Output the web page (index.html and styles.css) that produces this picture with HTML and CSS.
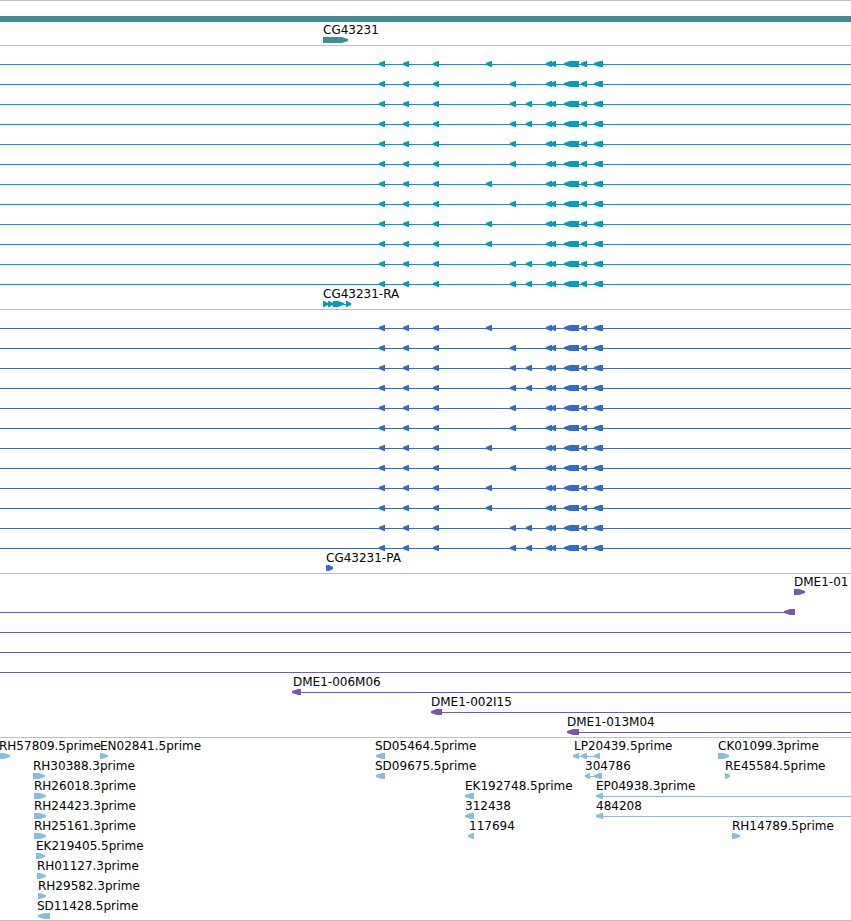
FILE: index.html
```html
<!DOCTYPE html>
<html lang="en">
<head>
  <meta charset="UTF-8" />
  <title>Genome browser – CG43231</title>
  <link rel="stylesheet" href="styles.css">
</head>
<body>
  <main class="browser">
    <section class="track genes" id="genes" aria-label="Genes"></section>
    <section class="track transcripts" id="transcripts" aria-label="Transcripts"></section>
    <section class="track cds" id="cds" aria-label="CDS"></section>
    <section class="track bacs" id="bacs" aria-label="BACs"></section>
    <section class="track ests" id="ests" aria-label="ESTs"></section>
  </main>
  <script src="tracks.js"></script>
</body>
</html>
```

FILE: styles.css
```css
* {
  box-sizing: border-box;
}
body {
  margin: 0;
  background: #fff;
  color: #000;
  font-family: "DejaVu Sans", sans-serif;
  font-size: 12px;
  line-height: 13px;
}
.browser {
  overflow: hidden;
}
.track {
  display: grid;
  border-top: 1px solid #c0c0c0;
  padding: 2px 0 1px;
}
.track:last-child {
  padding-bottom: 0;
  border-bottom: 1px solid #c0c0c0;
}
.row {
  position: relative;
  height: 20px;
  padding-top: 13px;
}
.label {
  position: absolute;
  top: 0;
  white-space: nowrap;
}
.glyphs {
  display: block;
  width: 100%;
  height: 6px;
}

/* track colours */
.genes {
  row-gap: 1px;
  fill: #408e95;
}
.transcripts {
  fill: #009ebd;
}
.cds {
  fill: #316ccc;
}
.bacs {
  fill: #7558a8;
}
.ests {
  fill: #88bddd;
}
```

FILE: tracks.js
```js
const SVG_NS = 'http://www.w3.org/2000/svg';
const HEAD = 6; // arrow head length

// exons shared by every splice variant, [start, end]
const sharedExons = [
  [379, 385], [403, 409], [433, 439],
  [546, 552], [551, 556], [564, 579], [581, 587], [594, 603]
];
const altExons = { A: [486, 492], B: [510, 516], C: [526, 532] };
const variants = ['A', 'B', 'BC', 'BC', 'B', 'B', 'A', 'B', 'A', 'A', 'BC', 'BC'];

const variantRows = variants.map((keys) => [{
  line: [0, null],
  left: sharedExons.concat([...keys].map((k) => altExons[k]))
}]);

// line: [start, end], end null runs to the edge of the view
const tracks = {
  genes: [
    [{ bar: true }],
    [{ name: 'CG43231', at: 323, right: [[323, 348]] }]
  ],
  transcripts: [
    ...variantRows,
    [{ name: 'CG43231-RA', at: 323, line: [323, 351], right: [[323, 328], [328, 333], [333, 344], [346, 351]] }]
  ],
  cds: [
    ...variantRows,
    [{ name: 'CG43231-PA', at: 326, right: [[326, 331], [328, 333]] }]
  ],
  bacs: [
    [{ name: 'DME1-01', at: 794, right: [[794, 805]] }],
    [{ line: [0, 795], left: [[784, 795]] }],
    [{ line: [0, null] }],
    [{ line: [0, null] }],
    [{ line: [0, null] }],
    [{ name: 'DME1-006M06', at: 293, line: [293, null], left: [[292, 301]] }],
    [{ name: 'DME1-002I15', at: 431, line: [431, null], left: [[431, 442]] }],
    [{ name: 'DME1-013M04', at: 567, line: [567, null], left: [[567, 579]] }]
  ],
  ests: [
    [
      { name: 'RH57809.5prime', at: -1, right: [[-1, 10]] },
      { name: 'EN02841.5prime', at: 100, right: [[100, 108]] },
      { name: 'SD05464.5prime', at: 375, left: [[376, 385]] },
      { name: 'LP20439.5prime', at: 574, line: [574, 600], left: [[573, 579], [581, 587], [594, 600]] },
      { name: 'CK01099.3prime', at: 718, right: [[718, 729]] }
    ],
    [
      { name: 'RH30388.3prime', at: 33, right: [[33, 45]] },
      { name: 'SD09675.5prime', at: 375, left: [[376, 385]] },
      { name: '304786', at: 585, line: [585, 602], left: [[585, 590], [594, 602]] },
      { name: 'RE45584.5prime', at: 725, right: [[725, 730]] }
    ],
    [
      { name: 'RH26018.3prime', at: 34, right: [[34, 46]] },
      { name: 'EK192748.5prime', at: 465, left: [[465, 474]] },
      { name: 'EP04938.3prime', at: 596, line: [596, null], left: [[596, 603]] }
    ],
    [
      { name: 'RH24423.3prime', at: 34, right: [[34, 46]] },
      { name: '312438', at: 465, left: [[465, 474]] },
      { name: '484208', at: 596, line: [596, null], left: [[596, 603]] }
    ],
    [
      { name: 'RH25161.3prime', at: 34, right: [[34, 46]] },
      { name: '117694', at: 469, left: [[468, 474]] },
      { name: 'RH14789.5prime', at: 732, right: [[732, 740]] }
    ],
    [{ name: 'EK219405.5prime', at: 36, right: [[36, 45]] }],
    [{ name: 'RH01127.3prime', at: 37, right: [[37, 46]] }],
    [{ name: 'RH29582.3prime', at: 38, right: [[38, 46]] }],
    [{ name: 'SD11428.5prime', at: 37, left: [[38, 50]] }]
  ]
};

function addShape(svg, tag, attrs) {
  const el = document.createElementNS(SVG_NS, tag);
  Object.keys(attrs).forEach((key) => el.setAttribute(key, attrs[key]));
  svg.appendChild(el);
}

function addRect(svg, x, width, y, height) {
  addShape(svg, 'rect', { x, y, width, height });
}

function addArrow(svg, start, end, toLeft) {
  // short exons keep a blunt edge behind the head
  const head = Math.min(HEAD, end - start - 1);
  const points = toLeft
    ? `${end},0 ${start + head},0 ${start},2 ${start},4 ${start + head},6 ${end},6`
    : `${start},0 ${end - head},0 ${end},2 ${end},4 ${end - head},6 ${start},6`;
  addShape(svg, 'polygon', { points });
}

function createRow(features) {
  const row = document.createElement('div');
  row.className = 'row';

  const svg = document.createElementNS(SVG_NS, 'svg');
  svg.setAttribute('class', 'glyphs');

  features.forEach((feature) => {
    if (feature.name) {
      const label = document.createElement('span');
      label.className = 'label';
      label.style.left = `${feature.at}px`;
      label.textContent = feature.name;
      row.appendChild(label);
    }
    if (feature.bar) {
      addRect(svg, 0, '100%', 0, 6);
    }
    if (feature.line) {
      const [start, end] = feature.line;
      addRect(svg, start, end === null ? '100%' : end - start, 3, 1);
    }
    (feature.left || []).forEach(([start, end]) => addArrow(svg, start, end, true));
    (feature.right || []).forEach(([start, end]) => addArrow(svg, start, end, false));
  });

  row.appendChild(svg);
  return row;
}

Object.keys(tracks).forEach((id) => {
  const track = document.getElementById(id);
  tracks[id].forEach((features) => track.appendChild(createRow(features)));
});
```
